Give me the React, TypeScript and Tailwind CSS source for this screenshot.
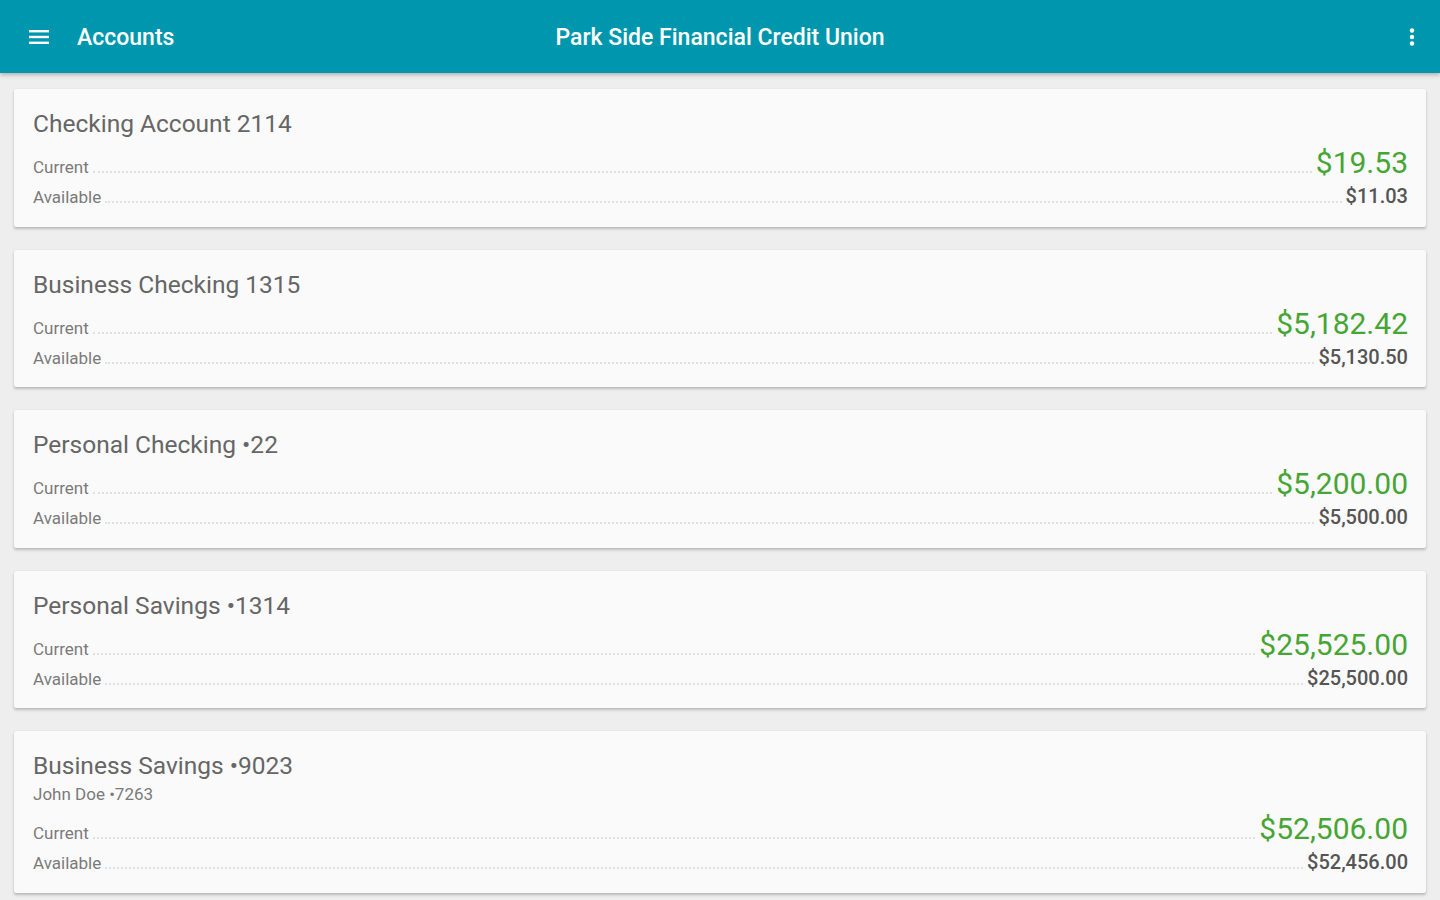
import React from 'react';

type Account = {
  name: string;
  owner?: string;
  current: string;
  available: string;
};

const accounts: Account[] = [
  { name: 'Checking Account 2114', current: '$19.53', available: '$11.03' },
  { name: 'Business Checking 1315', current: '$5,182.42', available: '$5,130.50' },
  { name: 'Personal Checking •22', current: '$5,200.00', available: '$5,500.00' },
  { name: 'Personal Savings •1314', current: '$25,525.00', available: '$25,500.00' },
  { name: 'Business Savings •9023', owner: 'John Doe •7263', current: '$52,506.00', available: '$52,456.00' },
];

function AccountCard({ account }: { account: Account }) {
  return (
    <div className="bg-[#fafafa] rounded-[2px] shadow-[0_2px_3px_rgba(0,0,0,0.22),0_0_1px_rgba(0,0,0,0.12)] pl-[19px] pr-[18px] pt-[20px] pb-[16px]">
      <div className="text-[24.5px] leading-[30px] text-[#666666]">{account.name}</div>
      {account.owner && (
        <div className="text-[17px] leading-[22px] text-[#7a7a7a] mt-[2px]">{account.owner}</div>
      )}
      <div className="flex items-baseline mt-[6px]">
        <span className="text-[17px] text-[#7a7a7a]">Current</span>
        <span className="flex-1 mx-[4px] border-b-2 border-dotted border-[#e0e0e0]" />
        <span className="text-[30px] leading-[36px] text-[#46a535]">{account.current}</span>
      </div>
      <div className="flex items-baseline mt-[3px]">
        <span className="text-[17px] text-[#7a7a7a]">Available</span>
        <span className="flex-1 mx-[4px] border-b-2 border-dotted border-[#e0e0e0]" />
        <span className="text-[20px] leading-[24px] font-medium text-[#555555]">{account.available}</span>
      </div>
    </div>
  );
}

export default function App() {
  return (
    <div className="min-h-[900px] bg-[#eeeeee] font-['Roboto',sans-serif]">
      <header className="relative z-10 h-[73px] bg-[#0097ae] flex items-center shadow-[0_2px_4px_rgba(0,0,0,0.25)] text-white">
        <div className="w-[77px] flex justify-center">
          <svg width="20" height="16" viewBox="0 0 20 16" fill="white">
            <rect x="0" y="1" width="20" height="2.4" />
            <rect x="0" y="6.8" width="20" height="2.4" />
            <rect x="0" y="12.6" width="20" height="2.4" />
          </svg>
        </div>
        <span className="text-[23px] font-medium pt-[4px]">Accounts</span>
        <span className="absolute left-1/2 -translate-x-1/2 text-[23px] font-medium pt-[4px]">Park Side Financial Credit Union</span>
        <div className="ml-auto mr-[25px]">
          <svg width="6" height="18" viewBox="0 0 6 18" fill="white">
            <circle cx="3" cy="2.5" r="2.2" />
            <circle cx="3" cy="9" r="2.2" />
            <circle cx="3" cy="15.5" r="2.2" />
          </svg>
        </div>
      </header>
      <main className="px-[14px] pt-[16px] flex flex-col gap-[23px]">
        {accounts.map((a) => (
          <AccountCard key={a.name} account={a} />
        ))}
      </main>
    </div>
  );
}
